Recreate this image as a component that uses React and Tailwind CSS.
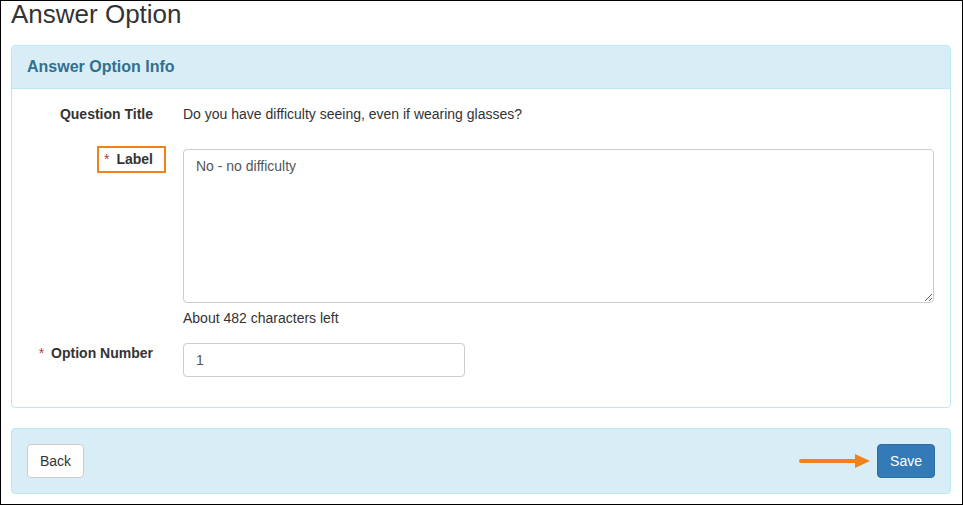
export default function App() {
  return (
    <div className="w-[963px] h-[505px] border border-black bg-white text-[14px] leading-[20px] text-[#333] overflow-hidden" style={{ fontFamily: '"Liberation Sans", Arial, sans-serif' }}>
      <h1 className="ml-[10px] text-[26px] leading-[26px] font-normal text-[#333]">Answer Option</h1>

      <div className="ml-[10px] mt-[18px] w-[940px] rounded-[4px] border border-[#bce8f1] bg-white">
        <div className="h-[43px] flex items-center px-[15px] bg-[#d9edf7] border-b border-[#bce8f1] rounded-t-[3px]">
          <span className="text-[16px] font-bold text-[#31708f]">Answer Option Info</span>
        </div>

        <div className="pt-[15px] pb-[30px] pl-[15px] pr-[16px]">
          <div className="flex gap-[30px]">
            <div className="w-[126px] shrink-0 text-right font-bold">Question Title</div>
            <div>Do you have difficulty seeing, even if wearing glasses?</div>
          </div>

          <div className="flex items-start gap-[30px] mt-[25px]">
            <div className="w-[126px] shrink-0 flex items-start justify-end">
              <span className="relative block">
                <span className="absolute left-[-7px] right-[-13px] top-[-3px] bottom-[-4px] border-2 border-[#f0821e]"></span>
                <span className="text-[#a94442]">*</span>
                <span className="font-bold ml-[7px]">Label</span>
              </span>
            </div>
            <div className="flex-1">
              <textarea
                className="block w-full h-[154px] border border-[#ccc] rounded-[4px] px-[12px] py-[6px] text-[#555] resize-y outline-none"
                style={{ fontFamily: '"Liberation Sans", Arial, sans-serif', fontSize: '14px', lineHeight: '20px' }}
                defaultValue="No - no difficulty"
              />
              <div className="mt-[5px]">About 482 characters left</div>
            </div>
          </div>

          <div className="flex items-start gap-[30px] mt-[15px]">
            <div className="w-[126px] shrink-0 text-right">
              <span className="text-[#a94442]">*</span>
              <span className="font-bold ml-[7px]">Option Number</span>
            </div>
            <div className="w-[282px] h-[34px] border border-[#ccc] rounded-[4px] px-[12px] flex items-center text-[#555]">
              <span>1</span>
            </div>
          </div>
        </div>
      </div>

      <div className="ml-[10px] mt-[20px] w-[940px] rounded-[4px] border border-[#bce8f1] bg-[#d9edf7] p-[15px] flex items-center justify-between">
        <button className="h-[34px] px-[12px] bg-white border border-[#ccc] rounded-[4px] text-[#333]">Back</button>
        <div className="flex items-center">
          <svg width="72" height="16" viewBox="0 0 72 16" className="mr-[6px]">
            <line x1="2" y1="8" x2="58" y2="8" stroke="#f0821e" strokeWidth="4" strokeLinecap="round" />
            <polygon points="56,1 71,8 56,15" fill="#f0821e" />
          </svg>
          <button className="h-[34px] px-[12px] bg-[#337ab7] border border-[#2e6da4] rounded-[4px] text-white">Save</button>
        </div>
      </div>
    </div>
  );
}
